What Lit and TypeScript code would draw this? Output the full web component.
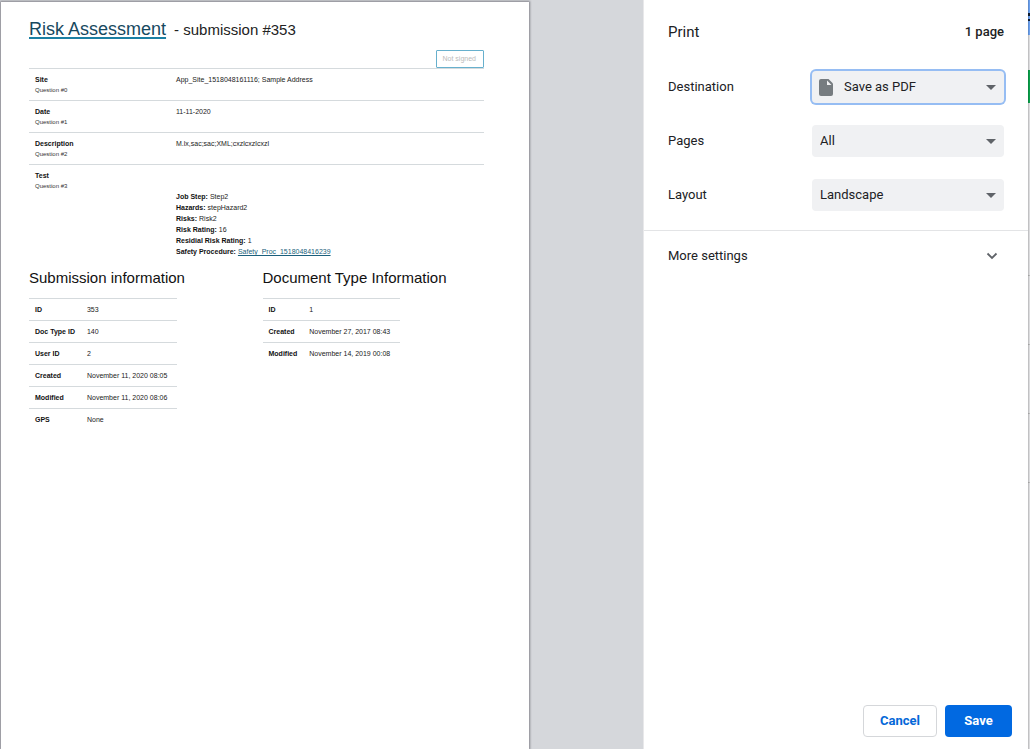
import { LitElement, html, css, svg } from "lit";
import { customElement } from "lit/decorators.js";

const arrow = svg`<path d="M0 0h10L5 5z" fill="#5f6368" />`;

@customElement("info-table")
class InfoTable extends LitElement {
  static properties = { heading: {}, rows: { attribute: false } };
  declare heading: string;
  declare rows: string[][];

  static styles = css`
    h2 { margin: 0 0 10px; font-size: 15px; line-height: 20px; font-weight: 400; color: #111; }
    table { border-collapse: collapse; font-size: 7px; line-height: 10px; color: #222; }
    th, td { border-top: 1px solid #d5dadd; padding: 6px 10px 5px 6px; text-align: left; font-weight: 400; white-space: nowrap; }
    th { font-weight: 700; color: #111; padding-right: 6px; }
  `;

  render() {
    return html`<h2>${this.heading}</h2>
      <table>
        <tbody>
          ${this.rows.map(([k, v]) => html`<tr><th scope="row">${k}</th><td>${v}</td></tr>`)}
        </tbody>
      </table>`;
  }
}

@customElement("submission-sheet")
class SubmissionSheet extends LitElement {
  static styles = css`
    :host { display: block; box-sizing: border-box; padding: 15px 45px 16px 28px; background: #fff; font-family: "Liberation Sans", Arial, sans-serif; color: #222; box-shadow: 0 0 2px 1px #85858c; }
    h1 { margin: 0; display: flex; align-items: baseline; gap: 8px; font-size: 18px; line-height: 24px; font-weight: 400; }
    h1 a { color: #17495f; text-decoration: underline 2px #1b7fa3; text-underline-offset: 2px; text-decoration-skip-ink: none; }
    h1 small { font-size: 15px; color: #222; }
    .status { display: flex; justify-content: flex-end; margin-top: 8px; }
    .badge { border: 1px solid #67b0cd; border-radius: 1px; padding: 3px 7px 3px 6px; font-size: 7px; line-height: 10px; color: #bbb; }
    .answers { width: 100%; border-collapse: collapse; table-layout: fixed; font-size: 7px; line-height: 11px; }
    .answers th, .answers td { border-top: 1px solid #d5dadd; padding: 5px 6px; text-align: left; vertical-align: top; font-weight: 400; }
    .answers th { width: 129px; }
    .answers tr:last-child th, .answers tr:last-child td { padding-bottom: 0; }
    .answers b, .details dt { font-weight: 700; color: #111; }
    .answers small { display: block; font-size: 6px; line-height: 10px; color: #333; }
    .details { margin: 21px 0 0; }
    .details div { display: flex; gap: 2px; }
    .details dd { margin: 0; }
    .details a { color: #1b5f7c; }
    .columns { display: grid; grid-template-columns: 1fr 1fr; gap: 12px; margin-top: 11px; }
  `;

  private questions = [
    ["Site", "App_Site_1518048161116; Sample Address"],
    ["Date", "11-11-2020"],
    ["Description", "M.lx,sac;sac;XML;cxzlcxzlcxzl"],
  ];
  private details = [
    ["Job Step:", "Step2"],
    ["Hazards:", "stepHazard2"],
    ["Risks:", "Risk2"],
    ["Risk Rating:", "16"],
    ["Residial Risk Rating:", "1"],
  ];
  private submission = [
    ["ID", "353"],
    ["Doc Type ID", "140"],
    ["User ID", "2"],
    ["Created", "November 11, 2020 08:05"],
    ["Modified", "November 11, 2020 08:06"],
    ["GPS", "None"],
  ];
  private docType = [
    ["ID", "1"],
    ["Created", "November 27, 2017 08:43"],
    ["Modified", "November 14, 2019 00:08"],
  ];

  render() {
    return html`
      <h1><a href="#assessment">Risk Assessment</a><small>- submission #353</small></h1>
      <div class="status"><span class="badge">Not signed</span></div>
      <table class="answers">
        <tbody>
          ${this.questions.map(
            ([q, a], i) => html`<tr><th scope="row"><b>${q}</b><small>Question #${i}</small></th><td>${a}</td></tr>`
          )}
          <tr>
            <th scope="row"><b>Test</b><small>Question #3</small></th>
            <td>
              <dl class="details">
                ${this.details.map(([k, v]) => html`<div><dt>${k}</dt><dd>${v}</dd></div>`)}
                <div><dt>Safety Procedure:</dt><dd><a href="#procedure">Safety_Proc_1518048416239</a></dd></div>
              </dl>
            </td>
          </tr>
        </tbody>
      </table>
      <div class="columns">
        <info-table .heading=${"Submission information"} .rows=${this.submission}></info-table>
        <info-table .heading=${"Document Type Information"} .rows=${this.docType}></info-table>
      </div>
    `;
  }
}

@customElement("print-settings")
class PrintSettings extends LitElement {
  static styles = css`
    :host { display: flex; flex-direction: column; background: #fff; font-family: Roboto, sans-serif; font-size: 13px; line-height: 20px; color: #202124; }
    header { display: flex; justify-content: space-between; align-items: center; padding: 20px 24px 0; line-height: 24px; }
    h1 { margin: 0; font-size: 15px; font-weight: 400; }
    .count { font-weight: 500; }
    .rows { display: grid; gap: 22px; padding: 27px 24px 19px; border-bottom: 1px solid #e3e4e6; }
    .row { display: grid; grid-template-columns: 1fr 192px; align-items: center; }
    .field { position: relative; display: grid; }
    select { appearance: none; height: 32px; border: 0; border-radius: 4px; padding: 0 28px 0 8px; background: #f0f1f3; font: inherit; color: inherit; outline: none; }
    .focused select { padding-left: 32px; box-shadow: 0 0 0 2px #96bdf3; }
    .arrow { position: absolute; right: 8px; top: 14px; pointer-events: none; }
    .doc { position: absolute; left: 7px; top: 8px; pointer-events: none; }
    .more { display: flex; justify-content: space-between; align-items: center; border: 0; background: none; padding: 15px 30px 13px 24px; font: inherit; color: inherit; }
    footer { display: flex; justify-content: flex-end; gap: 8px; margin-top: auto; padding: 12px 16px; }
    footer button { height: 32px; box-sizing: border-box; border-radius: 4px; font: inherit; font-weight: 700; }
    .cancel { padding: 0 16px; border: 1px solid #d5d7da; background: #fff; color: #0468d8; }
    .save { min-width: 67px; padding: 0 16px; border: 0; background: #0169e1; color: #fff; }
  `;

  private field(id: string, label: string, value: string, focused = false) {
    return html`<div class="row">
      <label for=${id}>${label}</label>
      <div class="field ${focused ? "focused" : ""}">
        <select id=${id}><option>${value}</option></select>
        ${focused
          ? html`<svg class="doc" width="14" height="17" viewBox="0 0 14 17"><path d="M2 0h7.500l4.500 4.500V15a2 2 0 0 1-2 2H2a2 2 0 0 1-2-2V2a2 2 0 0 1 2-2z" fill="#767c80" /><path d="M8 1.500V6h4.500z" fill="#f0f1f3" /></svg>`
          : ""}
        <svg class="arrow" width="10" height="5" viewBox="0 0 10 5">${arrow}</svg>
      </div>
    </div>`;
  }

  render() {
    return html`
      <header><h1>Print</h1><span class="count">1 page</span></header>
      <div class="rows">
        ${this.field("destination", "Destination", "Save as PDF", true)}
        ${this.field("pages", "Pages", "All")}
        ${this.field("layout", "Layout", "Landscape")}
      </div>
      <button class="more" aria-expanded="false">
        <span>More settings</span>
        <svg width="12" height="8" viewBox="0 0 12 8"><path d="M1.500 1.500 6 6l4.500-4.500" fill="none" stroke="#5f6368" stroke-width="1.800" /></svg>
      </button>
      <footer><button class="cancel">Cancel</button><button class="save">Save</button></footer>
    `;
  }
}

@customElement("app-root")
class AppRoot extends LitElement {
  static styles = css`
    :host { display: grid; grid-template-columns: 1fr 384px 2px; min-height: 100vh; }
    .preview { display: grid; padding: 2px 114px 0 1px; background: #d5d7db; border-right: 1px solid #e8e8ea; overflow: hidden; }
    .backdrop {
      background:
        linear-gradient(90deg, #0000001f 1px, #0000 1px),
        linear-gradient(#6ba0ee 0 13px, #101c30 13px 16px, #6ba0ee 16px 19px, #101c30 19px 21px, #6ba0ee 21px 35px, #dcdcde 35px 70px, #0a9f4a 70px 103px, #dcdcde 103px 275px, #b8b8b8 275px 276px, #dcdcde 276px 344px, #b8b8b8 344px 345px, #dcdcde 345px 413px, #b8b8b8 413px 414px, #dcdcde 414px 482px, #b8b8b8 482px 483px, #dcdcde 483px);
    }
  `;

  render() {
    return html`
      <main class="preview"><submission-sheet></submission-sheet></main>
      <print-settings></print-settings>
      <div class="backdrop"></div>
    `;
  }
}
